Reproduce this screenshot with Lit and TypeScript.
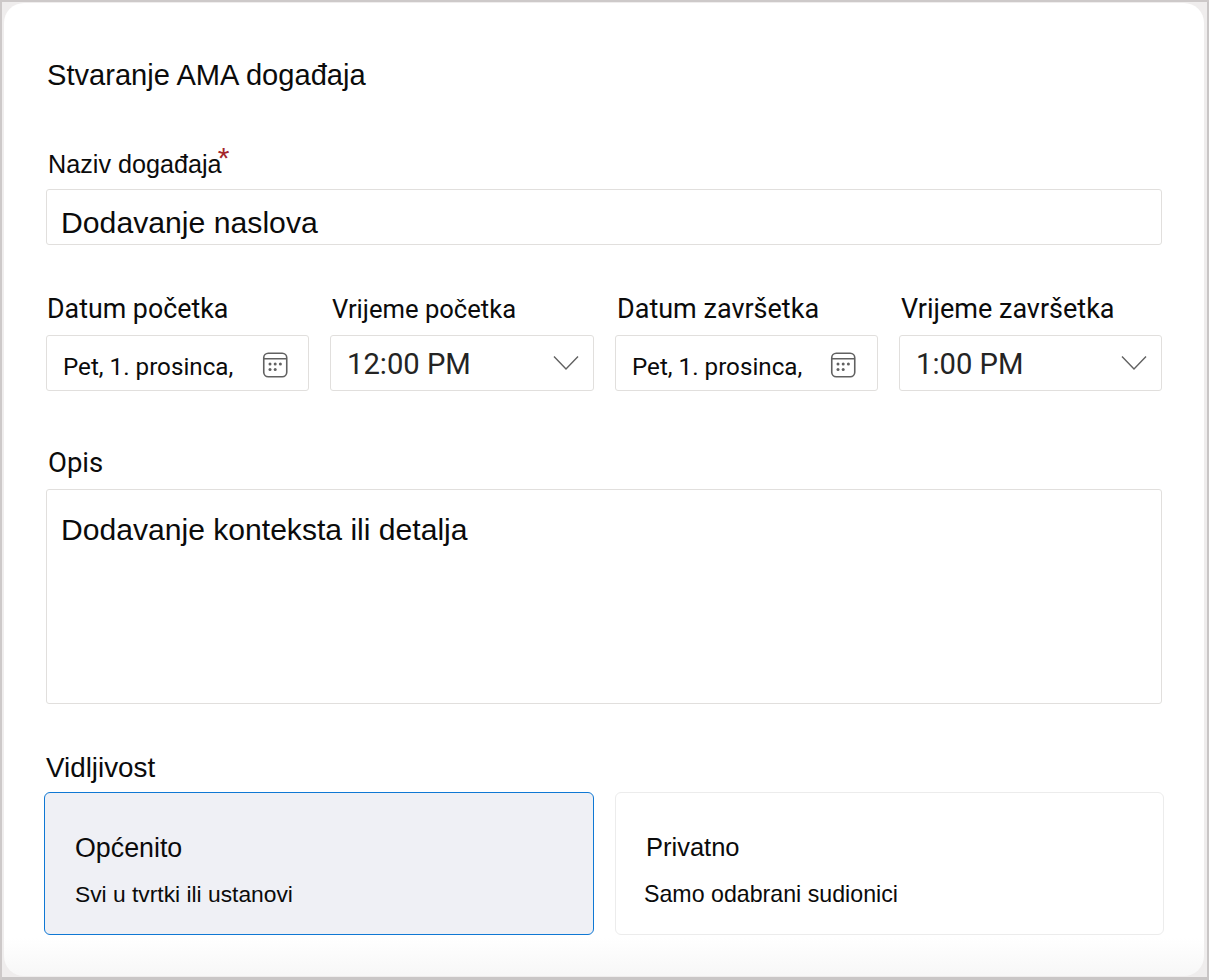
import { LitElement, html, css, svg } from "lit";
import { customElement } from "lit/decorators.js";

const calendar = svg`<svg class="cal" width="26" height="26" viewBox="0 0 26 26" fill="none">
  <rect x="1.75" y="1.25" width="23" height="23.5" rx="4.5" stroke="#616161" stroke-width="1.6"/>
  <path d="M2 6.75H24.5" stroke="#616161" stroke-width="1.5"/>
  <g fill="#616161"><circle cx="8" cy="12" r="1.5"/><circle cx="13.2" cy="12" r="1.5"/><circle cx="18.4" cy="12" r="1.5"/><circle cx="8" cy="17.4" r="1.5"/><circle cx="13.2" cy="17.4" r="1.5"/></g>
</svg>`;

const chevron = svg`<svg class="chev" width="26" height="16" viewBox="0 0 26 16" fill="none">
  <path d="M1 1.5L13 14L25 1.5" stroke="#616161" stroke-width="1.4"/>
</svg>`;

@customElement("app-root")
export class AppRoot extends LitElement {
  static styles = css`
    :host {
      display: block;
      height: 980px;
      box-sizing: border-box;
      padding: 3px 5px 4px 4px;
      background: #efeded;
      font-family: "Liberation Sans", Arial, sans-serif;
      color: #0b0b0b;
      box-shadow: inset 2px 2px 0 #cdc9c9, inset -2px -3px 0 #c9c6c6;
    }
    .dialog {
      box-sizing: border-box;
      height: 973px;
      width: 1200px;
      background: linear-gradient(#fff 0, #fff 935px, #f7f7f7 973px);
      border-radius: 20px;
      padding: 55px 42px 0 42px;
      display: flex;
      flex-direction: column;
    }
    h1 {
      margin: 0 0 0 1px;
      font-size: 29.1px;
      line-height: 34px;
      font-weight: 400;
    }
    .label {
      font-family: Roboto, "Liberation Sans", sans-serif;
      font-size: 26.8px;
      line-height: 30px;
      font-weight: 400;
    }
    .name-label {
      margin: 57px 0 10px 2px;
      font-family: "Liberation Sans", Arial, sans-serif;
      font-size: 25.2px;
      position: relative;
      line-height: 30px;
    }
    .star {
      color: #a4262c;
      font-size: 30px;
      line-height: 30px;
      position: absolute;
      top: -6px;
      margin-left: -4px;
    }
    .field {
      box-sizing: border-box;
      border: 1px solid #e1dfdd;
      border-radius: 3px;
      background: #fff;
      display: flex;
      align-items: center;
    }
    .title-input {
      height: 56px;
      padding: 11px 0 0 14px;
      font-size: 30.2px;
    }
    .row {
      display: grid;
      grid-template-columns: 263px 264px 263px 263px;
      column-gap: 21px;
      margin-top: 48px;
    }
    .col .label {
      margin: 0 0 11px 1px;
      padding-top: 1px;
    }
    .col .label.time { margin-left: 2px; }
    .col .label.narrow { font-size: 25.6px; }
    .col .label.wide { font-size: 27px; }
    .date {
      height: 56px;
      padding: 0 20px 0 16px;
      justify-content: space-between;
      font-family: Roboto, "Liberation Sans", sans-serif;
      font-size: 24.2px;
    }
    .date span { padding-top: 8px; }
    .date svg { margin-top: 4px; }
    .date.end { padding-right: 21px; }
    .time-field {
      height: 56px;
      padding: 0 14px 0 16px;
      justify-content: space-between;
      font-family: Roboto, "Liberation Sans", sans-serif;
      font-size: 29.2px;
      color: #242424;
    }
    .time-field span { padding-top: 2px; }
    .opis-label { margin: 57px 0 11px 2px; font-size: 27.5px; }
    .textarea {
      height: 215px;
      padding: 23px 0 0 14px;
      font-size: 30.1px;
      line-height: 34px;
      align-items: flex-start;
    }
    .vid-label {
      margin: 49px 0 9px 0;
      font-family: "Liberation Sans", Arial, sans-serif;
      font-size: 27.8px;
    }
    .cards {
      display: grid;
      grid-template-columns: 550px 549px;
      column-gap: 21px;
      margin-left: -2px;
    }
    .card {
      box-sizing: border-box;
      height: 143px;
      border: 1px solid #ececec;
      border-radius: 6px;
      background: #fff;
      padding: 39px 0 0 30px;
    }
    .card.selected {
      background: #eff0f5;
      border-color: #0f78d4;
      padding-top: 40px;
    }
    .card h2 {
      margin: 0;
      font-size: 26.8px;
      line-height: 30px;
      font-weight: 400;
    }
    .card p {
      margin: 17px 0 0 0;
      font-size: 22.8px;
      line-height: 28px;
    }
    .card.private h2 { font-size: 25.5px; }
    .card.private p { margin: 18px 0 0 -2px; font-size: 23.2px; }
    svg { flex: none; display: block; }
  `;

  render() {
    return html`
      <div class="dialog">
        <h1>Stvaranje AMA događaja</h1>
        <div class="label name-label">Naziv događaja<span class="star">*</span></div>
        <div class="field title-input">Dodavanje naslova</div>
        <div class="row">
          <div class="col">
            <div class="label">Datum početka</div>
            <div class="field date"><span>Pet, 1. prosinca,</span>${calendar}</div>
          </div>
          <div class="col">
            <div class="label time narrow">Vrijeme početka</div>
            <div class="field time-field"><span>12:00 PM</span>${chevron}</div>
          </div>
          <div class="col">
            <div class="label time wide">Datum završetka</div>
            <div class="field date end"><span>Pet, 1. prosinca,</span>${calendar}</div>
          </div>
          <div class="col">
            <div class="label time wide">Vrijeme završetka</div>
            <div class="field time-field"><span>1:00 PM</span>${chevron}</div>
          </div>
        </div>
        <div class="label opis-label">Opis</div>
        <div class="field textarea">Dodavanje konteksta ili detalja</div>
        <div class="label vid-label">Vidljivost</div>
        <div class="cards">
          <div class="card selected">
            <h2>Općenito</h2>
            <p>Svi u tvrtki ili ustanovi</p>
          </div>
          <div class="card private">
            <h2>Privatno</h2>
            <p>Samo odabrani sudionici</p>
          </div>
        </div>
      </div>
    `;
  }
}
